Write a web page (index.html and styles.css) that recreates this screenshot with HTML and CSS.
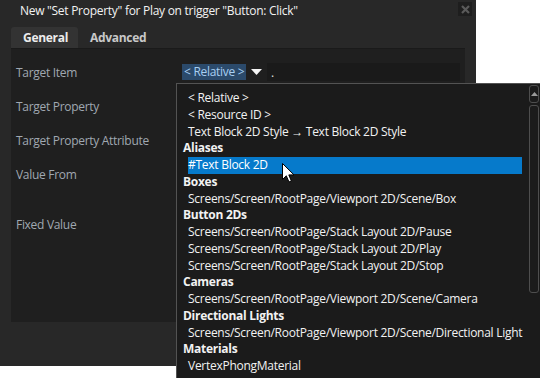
FILE: index.html
```html
<!DOCTYPE html>
<html>
<head>
<meta charset="utf-8">
<link rel="stylesheet" href="styles.css">
</head>
<body>
<div class="dialog">
  <div class="titlebar">
    <span class="title">New "Set Property" for Play on trigger "Button: Click"</span>
    <span class="close"><svg width="9" height="9" viewBox="0 0 9 9"><path d="M1 1L8 8M8 1L1 8" stroke="#5a5a5a" stroke-width="2.2"/></svg></span>
  </div>
  <div class="tabs">
    <div class="tab active">General</div>
    <div class="tab">Advanced</div>
  </div>
  <div class="panel">
    <div class="row"><div class="label">Target Item</div>
      <div class="control">
        <span class="rel">&lt; Relative &gt;</span>
        <span class="caret"><svg width="11" height="6" viewBox="0 0 11 6"><path d="M0 0H11L5.5 6Z" fill="#f4f4f4"/></svg></span>
        <span class="field">.</span>
      </div>
    </div>
    <div class="row"><div class="label">Target Property</div></div>
    <div class="row"><div class="label">Target Property Attribute</div></div>
    <div class="row tall"><div class="label">Value From</div></div>
    <div class="row"><div class="label">Fixed Value</div></div>
  </div>
</div>

<div class="dropdown">
  <div class="list">
    <div class="item">&lt; Relative &gt;</div>
    <div class="item">&lt; Resource ID &gt;</div>
    <div class="item">Text Block 2D Style → Text Block 2D Style</div>
    <div class="head">Aliases</div>
    <div class="item sel">#Text Block 2D</div>
    <div class="head">Boxes</div>
    <div class="item">Screens/Screen/RootPage/Viewport 2D/Scene/Box</div>
    <div class="head">Button 2Ds</div>
    <div class="item">Screens/Screen/RootPage/Stack Layout 2D/Pause</div>
    <div class="item">Screens/Screen/RootPage/Stack Layout 2D/Play</div>
    <div class="item">Screens/Screen/RootPage/Stack Layout 2D/Stop</div>
    <div class="head">Cameras</div>
    <div class="item">Screens/Screen/RootPage/Viewport 2D/Scene/Camera</div>
    <div class="head">Directional Lights</div>
    <div class="item">Screens/Screen/RootPage/Viewport 2D/Scene/Directional Light</div>
    <div class="head">Materials</div>
    <div class="item">VertexPhongMaterial</div>
  </div>
  <div class="scrollbar">
    <div class="sb-up"><svg width="7" height="4" viewBox="0 0 7 4"><path d="M0 4H7L3.5 0Z" fill="#9a9a9a"/></svg></div>
    <div class="sb-thumb"></div>
  </div>
  <svg class="cursor" width="13" height="20" viewBox="0 0 13 20"><path d="M0.5 0.5V16.5L4.3 12.8L7 19L9.4 18L6.8 11.9H12Z" fill="#fff" stroke="#000" stroke-width="1"/></svg>
</div>
</body>
</html>
```

FILE: styles.css
```css
html, body {
  margin: 0;
  padding: 0;
  background: #ffffff;
  width: 540px;
  height: 378px;
  overflow: hidden;
  position: relative;
  font-family: "Open Sans", "Noto Sans", sans-serif;
  font-size: 12px;
}

.dialog {
  width: 476px;
  height: 366px;
  background: #282828;
  display: flex;
  flex-direction: column;
}

.titlebar {
  height: 22px;
  display: flex;
  align-items: center;
  justify-content: space-between;
  padding: 0 4px 0 20px;
}

.title {
  color: #f2f2f2;
  font-size: 12px;
  letter-spacing: -0.28px;
  margin-top: -2px;
}

.close {
  width: 14px;
  height: 14px;
  background: #1e1e1e;
  display: flex;
  align-items: center;
  justify-content: center;
  margin-top: -4px;
}

.tabs {
  display: flex;
  margin: 5px 0 0 11px;
  height: 21px;
}

.tab {
  height: 21px;
  display: flex;
  align-items: center;
  font-weight: bold;
  color: #c8c8c8;
  padding: 0 12px;
  letter-spacing: -0.3px;
}

.tab.active {
  width: 67px;
  box-sizing: border-box;
  background: #333333;
  color: #ececec;
  border-radius: 3px 3px 0 0;
}

.panel {
  margin: 0 11px;
  height: 274px;
  background: #1f1f1f;
  border-top: 1px solid #1a1a1a;
  box-sizing: border-box;
  padding: 6px 5px 0 5px;
  display: flex;
  flex-direction: column;
}

.row {
  height: 34px;
  display: flex;
  align-items: center;
}

.row.tall {
  height: 50px;
  align-items: flex-start;
  padding-top: 9px;
  box-sizing: border-box;
}

.label {
  width: 166px;
  color: #a0a8b1;
  letter-spacing: -0.3px;
}

.control {
  display: flex;
  align-items: center;
  height: 18px;
}

.rel {
  background: #2b4a6b;
  color: #a8cff2;
  height: 16px;
  line-height: 16px;
  padding: 0 0 0 2px;
  width: 64px;
  box-sizing: border-box;
  letter-spacing: -0.3px;
  white-space: nowrap;
}

.caret {
  width: 21px;
  display: flex;
  justify-content: center;
  align-items: center;
}

.field {
  width: 193px;
  height: 18px;
  background: #1a1a1a;
  color: #e0e0e0;
  padding-left: 4px;
  box-sizing: border-box;
  line-height: 19px;
}

.dropdown {
  position: absolute;
  left: 176px;
  top: 83px;
  width: 370px;
  height: 310px;
  background: #1b1b1b;
  border: 1px solid #535353;
  box-sizing: border-box;
}

.list {
  padding-top: 6px;
  width: 346px;
}

.item, .head {
  height: 16.75px;
  line-height: 16.75px;
  color: #f2f2f2;
  white-space: nowrap;
  letter-spacing: -0.27px;
}

.item {
  margin-left: 11px;
  width: 334px;
}

.head {
  padding-left: 6px;
  font-weight: bold;
}

.item.sel {
  background: #067acb;
  color: #ffffff;
}

.scrollbar {
  position: absolute;
  left: 352px;
  top: 1px;
  width: 10px;
  display: flex;
  flex-direction: column;
  gap: 2px;
}

.sb-up {
  height: 18px;
  border: 1px solid #4e4e4e;
  border-radius: 3px;
  box-sizing: border-box;
  display: flex;
  align-items: center;
  justify-content: center;
}

.sb-thumb {
  height: 188px;
  border: 1px solid #4e4e4e;
  border-radius: 3px;
  box-sizing: border-box;
}

.cursor {
  position: absolute;
  left: 105px;
  top: 79px;
}
```
